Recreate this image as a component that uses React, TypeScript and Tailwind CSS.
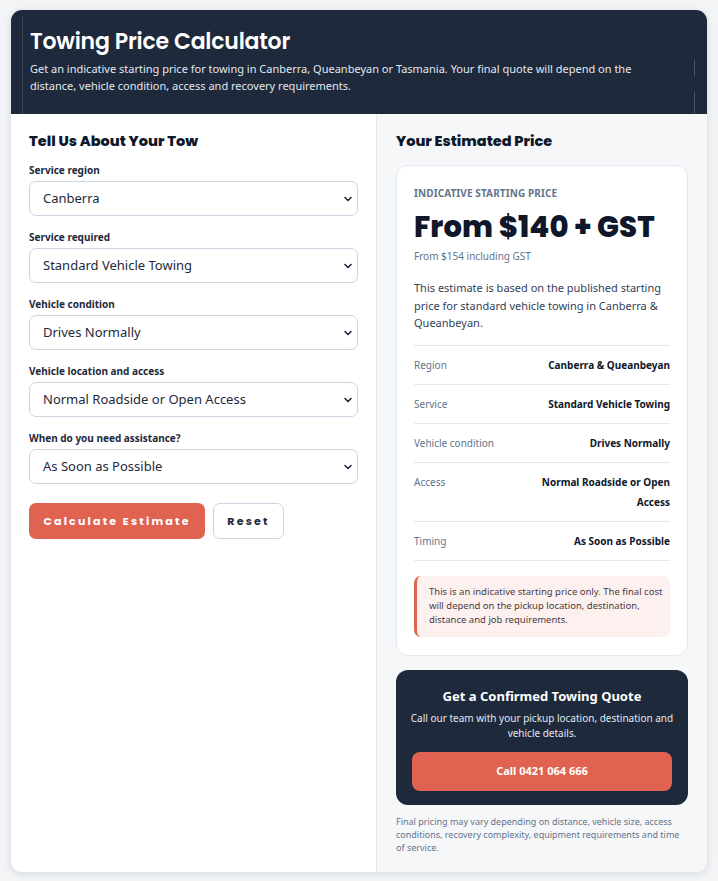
import React from "react";

const heading = { fontFamily: "Poppins, Inter, 'Liberation Sans', sans-serif" };
const body = { fontFamily: "'Noto Sans', 'Open Sans', sans-serif" };

function Chevron() {
  return (
    <svg width="12" height="12" viewBox="0 0 24 24" fill="none" stroke="#1e293b" strokeWidth="3.2" strokeLinecap="round" strokeLinejoin="round">
      <path d="M6 9l6 6 6-6" />
    </svg>
  );
}

function Field({ label, value }: { label: string; value: string }) {
  return (
    <div className="flex flex-col">
      <div className="text-[10px] leading-[14px] font-bold text-[#1e293b]">{label}</div>
      <div className="mt-[4px] h-[35px] rounded-[7px] border border-[#cbd5e1] bg-white flex items-center justify-between pl-[13px] pr-[3px]">
        <span className="text-[13px] text-[#1e293b]">{value}</span>
        <Chevron />
      </div>
    </div>
  );
}

function Row({ label, value }: { label: string; value: React.ReactNode }) {
  return (
    <div className="flex justify-between items-start py-[9px] border-b border-[#e2e8f0] text-[10px] leading-[20px]">
      <span className="text-[#64748b]">{label}</span>
      <span className="font-bold text-[#0f172a] text-right max-w-[150px]">{value}</span>
    </div>
  );
}

export default function App() {
  return (
    <div className="min-h-[881px] bg-[#f3f4f6] px-[10px] pt-[9px] pb-[8px]" style={body}>
      <div className="rounded-[12px] overflow-hidden bg-white shadow-[0_2px_6px_rgba(15,23,42,0.10)] border border-[#e2e8f0]">
        {/* Header */}
        <div className="relative bg-[#1e293b] pl-[19px] pr-[19px] pt-[18px] pb-[20px]">
          <div className="absolute left-[11px] top-[6px] bottom-0 w-px bg-[#3b4658]" />
          <div className="absolute right-[12px] top-[50px] h-[16px] w-px bg-[#4b5668]" />
          <div className="absolute right-[12px] top-[82px] h-[21px] w-px bg-[#4b5668]" />
          <h1 className="text-[22px] leading-[28px] font-semibold text-white tracking-[-0.2px]" style={heading}>
            Towing Price Calculator
          </h1>
          <p className="mt-[4px] text-[11px] leading-[17px] text-[#e2e8f0] max-w-[610px]">
            Get an indicative starting price for towing in Canberra, Queanbeyan or Tasmania. Your final quote will depend on the distance, vehicle condition, access and recovery requirements.
          </p>
        </div>

        <div className="grid grid-cols-[366px_1fr]">
          {/* Left */}
          <div className="px-[18px] pt-[17px] pb-[20px] border-r border-[#e2e8f0]">
            <h2 className="text-[14.5px] leading-[20px] font-extrabold text-[#0f172a]" style={heading}>
              Tell Us About Your Tow
            </h2>
            <div className="mt-[12px] flex flex-col gap-[14px]">
              <Field label="Service region" value="Canberra" />
              <Field label="Service required" value="Standard Vehicle Towing" />
              <Field label="Vehicle condition" value="Drives Normally" />
              <Field label="Vehicle location and access" value="Normal Roadside or Open Access" />
              <Field label="When do you need assistance?" value="As Soon as Possible" />
            </div>
            <div className="mt-[19px] flex gap-[8px]">
              <div className="h-[36px] w-[176px] rounded-[7px] bg-[#e06351] flex items-center justify-center text-white text-[11px] font-bold tracking-[2.2px]" style={heading}>
                Calculate Estimate
              </div>
              <div className="h-[36px] w-[71px] rounded-[7px] border border-[#cbd5e1] bg-white flex items-center justify-center text-[#1e293b] text-[11px] font-bold tracking-[2.2px]" style={heading}>
                Reset
              </div>
            </div>
          </div>

          {/* Right */}
          <div className="bg-[#f6f7f9] px-[19px] pt-[17px] pb-[18px]">
            <h2 className="text-[14.5px] leading-[20px] font-extrabold text-[#0f172a]" style={heading}>
              Your Estimated Price
            </h2>
            <div className="mt-[14px] bg-white rounded-[12px] border border-[#e2e8f0] px-[17px] pt-[21px] pb-[18px]">
              <div className="text-[10px] leading-[13px] font-bold text-[#64748b] tracking-[0.1px]">INDICATIVE STARTING PRICE</div>
              <div className="mt-[10px] text-[29px] leading-[34px] font-extrabold text-[#0f172a] tracking-[0.1px]" style={heading}>
                From $140 + GST
              </div>
              <div className="mt-[6px] text-[10px] leading-[12px] text-[#64748b]">From $154 including GST</div>
              <p className="mt-[17px] text-[11px] leading-[17.5px] text-[#334155]">
                This estimate is based on the published starting price for standard vehicle towing in Canberra &amp; Queanbeyan.
              </p>
              <div className="mt-[13px] border-t border-[#e2e8f0]">
                <Row label="Region" value="Canberra & Queanbeyan" />
                <Row label="Service" value="Standard Vehicle Towing" />
                <Row label="Vehicle condition" value="Drives Normally" />
                <Row label="Access" value="Normal Roadside or Open Access" />
                <Row label="Timing" value="As Soon as Possible" />
              </div>
              <div className="mt-[15px] rounded-[7px] border-l-[3px] border-[#e06351] bg-[#fdf1ef] pl-[12px] pr-[4px] pt-[9px] pb-[10px] text-[9.5px] leading-[14px] text-[#4b3a3f] whitespace-nowrap">
                This is an indicative starting price only. The final cost
                <br />
                will depend on the pickup location, destination,
                <br />
                distance and job requirements.
              </div>
            </div>

            <div className="mt-[14px] bg-[#1e293b] rounded-[12px] px-[16px] pt-[17px] pb-[14px] text-center">
              <div className="text-[13px] leading-[18px] font-bold text-white">Get a Confirmed Towing Quote</div>
              <p className="mt-[6px] -mx-[10px] text-[10px] leading-[15px] text-[#e2e8f0]">
                Call our team with your pickup location, destination and
                <br />
                vehicle details.
              </p>
              <div className="mt-[11px] h-[39px] rounded-[8px] bg-[#e06351] flex items-center justify-center text-white text-[11px] font-bold">
                Call 0421 064 666
              </div>
            </div>

            <p className="mt-[10px] text-[9px] leading-[13px] text-[#64748b]">
              Final pricing may vary depending on distance, vehicle size, access conditions, recovery complexity, equipment requirements and time of service.
            </p>
          </div>
        </div>
      </div>
    </div>
  );
}
